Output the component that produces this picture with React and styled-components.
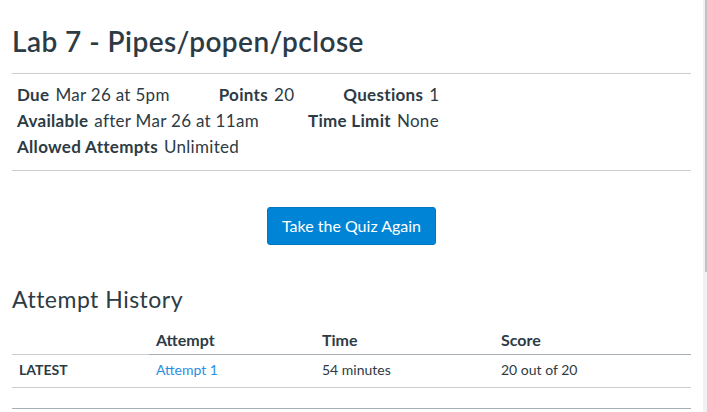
import React from "react";
import styled, { createGlobalStyle } from "styled-components";

const Global = createGlobalStyle`
  html, body { margin: 0; padding: 0; background: #fff; }
  body { font-family: Lato, "Open Sans", "Liberation Sans", sans-serif; color: #2d3b45; overflow: hidden; }
`;

const Shell = styled.div`
  display: flex;
  width: 707px;
  height: 412px;
  overflow: hidden;
`;

const Main = styled.main`
  flex: 1;
  padding: 0 12px;
  min-width: 0;
`;

const ScrollTrack = styled.div`
  width: 4px;
  flex: 0 0 4px;
  background: #f1f1f1;
  display: flex;
  justify-content: flex-end;
`;

const ScrollThumb = styled.div`
  width: 2px;
  height: 272px;
  background: #c1c1c1;
`;

const Title = styled.h1`
  margin: 25px 0 14px;
  font-size: 28px;
  letter-spacing: 0.45px;
  line-height: 1.2;
  font-weight: 600;
  color: #2d3b45;
`;

const Rule = styled.hr`
  margin: 0;
  border: 0;
  height: 1px;
  background: ${(p) => (p.$dark ? "#a5afb5" : "#c7cdd1")};
`;

const Details = styled.div`
  padding: 8px 5px 10px;
  font-size: 17px;
  letter-spacing: 0.3px;
  line-height: 26px;
`;

const DetailRow = styled.div`
  display: flex;
  gap: 49px;
`;

const Control = styled.div`
  display: flex;
  gap: 6px;
  white-space: nowrap;
`;

const Label = styled.span`
  font-weight: 700;
`;

const Value = styled.span`
  font-weight: 400;
`;

const ButtonBar = styled.div`
  display: flex;
  justify-content: center;
  margin: 36px 0 41px;
`;

const Button = styled.button`
  font-family: inherit;
  font-size: 16px;
  line-height: 20px;
  height: 38px;
  padding: 0 14px;
  color: #fff;
  background: #0084d6;
  border: 1px solid #0077c2;
  border-radius: 3px;
  cursor: pointer;
`;

const Heading = styled.h2`
  margin: 0 0 5px;
  font-size: 23px;
  letter-spacing: 0.5px;
  line-height: 26px;
  font-weight: 400;
  color: #2d3b45;
`;

const Table = styled.table`
  width: 100%;
  border-collapse: collapse;
  table-layout: fixed;
`;

const Th = styled.th`
  text-align: left;
  font-size: 16px;
  line-height: 20px;
  font-weight: 700;
  padding: 13px 7px 4px;
  border-bottom: 1px solid ${(p) => (p.$light ? "#c7cdd1" : "#a5afb5")};
  width: ${(p) => (p.$w ? `${p.$w}px` : "auto")};
`;

const Td = styled.td`
  line-height: 20px;
  padding: 5px 7px 7px;
  border-bottom: 1px solid #c7cdd1;
  font-weight: ${(p) => (p.$bold ? 700 : 400)};
  text-transform: ${(p) => (p.$bold ? "uppercase" : "none")};
  font-size: 14px;
`;

const Link = styled.a`
  color: #2b8ee2;
  text-decoration: none;
`;

const Spacer = styled.div`
  height: 20px;
`;

export default function App() {
  return (
    <>
      <Global />
      <Shell>
        <Main>
          <Title>Lab 7 - Pipes/popen/pclose</Title>
          <Rule />
          <Details>
            <DetailRow>
              <Control><Label>Due</Label><Value>Mar 26 at 5pm</Value></Control>
              <Control><Label>Points</Label><Value>20</Value></Control>
              <Control><Label>Questions</Label><Value>1</Value></Control>
            </DetailRow>
            <DetailRow>
              <Control><Label>Available</Label><Value>after Mar 26 at 11am</Value></Control>
              <Control><Label>Time Limit</Label><Value>None</Value></Control>
            </DetailRow>
            <DetailRow>
              <Control><Label>Allowed Attempts</Label><Value>Unlimited</Value></Control>
            </DetailRow>
          </Details>
          <Rule />
          <ButtonBar>
            <Button>Take the Quiz Again</Button>
          </ButtonBar>
          <Heading>Attempt History</Heading>
          <Table>
            <thead>
              <tr>
                <Th $light $w={123}></Th>
                <Th $w={152}>Attempt</Th>
                <Th $w={165}>Time</Th>
                <Th>Score</Th>
              </tr>
            </thead>
            <tbody>
              <tr>
                <Td $bold>Latest</Td>
                <Td><Link href="#">Attempt 1</Link></Td>
                <Td>54 minutes</Td>
                <Td>20 out of 20</Td>
              </tr>
            </tbody>
          </Table>
          <Spacer />
          <Rule $dark />
        </Main>
        <ScrollTrack>
          <ScrollThumb />
        </ScrollTrack>
      </Shell>
    </>
  );
}
